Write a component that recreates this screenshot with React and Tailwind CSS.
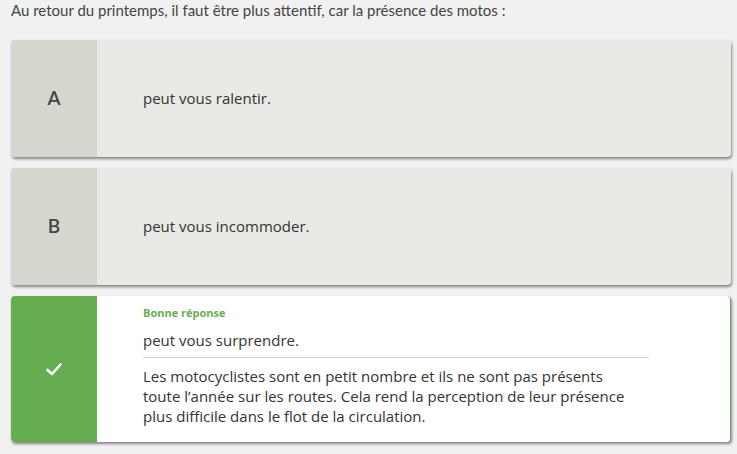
export default function App() {
  const choices = [
    { letter: "A", text: "peut vous ralentir." },
    { letter: "B", text: "peut vous incommoder." },
  ];

  return (
    <div className="min-h-[454px] bg-[#f1f1f1] px-[11px] pb-4 font-['Lato',sans-serif]">
      <p className="pt-0 text-[15px] leading-[20px] text-[#444]">
        Au retour du printemps, il faut être plus attentif, car la présence des motos :
      </p>

      <div className="mt-[20px] flex w-[720px] flex-col gap-[11px]">
        {choices.map((c) => (
          <div
            key={c.letter}
            className="flex h-[117px] overflow-hidden rounded-[4px] bg-[#e9eae6] shadow-[1px_2px_3px_rgba(0,0,0,0.45)]"
          >
            <div className="flex w-[86px] shrink-0 items-center justify-center bg-[#d5d7ce] text-[19px] font-semibold text-[#444]">
              {c.letter}
            </div>
            <div className="flex items-center pl-[46px] font-['Open_Sans',sans-serif] text-[15px] text-[#333]">
              {c.text}
            </div>
          </div>
        ))}

        <div className="flex h-[146px] overflow-hidden rounded-[4px] border-r border-[#66ad52] bg-white shadow-[1px_2px_3px_rgba(0,0,0,0.45)]">
          <div className="flex w-[86px] shrink-0 items-center justify-center bg-[#66ad52]">
            <svg width="16" height="13" viewBox="0 0 16 13" fill="none">
              <path d="M1.5 7 L6 11 L14.5 1.5" stroke="white" strokeWidth="2.6" strokeLinecap="round" strokeLinejoin="round" />
            </svg>
          </div>
          <div className="w-[552px] pl-[46px] pt-[10px] font-['Open_Sans',sans-serif] text-[#333]">
            <div className="text-[11px] font-bold leading-[14px] text-[#66ad52]">Bonne réponse</div>
            <div className="mt-[10px] pb-[7px] text-[15px] leading-[20px]">peut vous surprendre.</div>
            <div className="border-t border-[#d5d7ce] pt-[8px] text-[15px] leading-[20px]">
              Les motocyclistes sont en petit nombre et ils ne sont pas présents
              <br />
              toute l’année sur les routes. Cela rend la perception de leur présence
              <br />
              plus difficile dans le flot de la circulation.
            </div>
          </div>
        </div>
      </div>
    </div>
  );
}
